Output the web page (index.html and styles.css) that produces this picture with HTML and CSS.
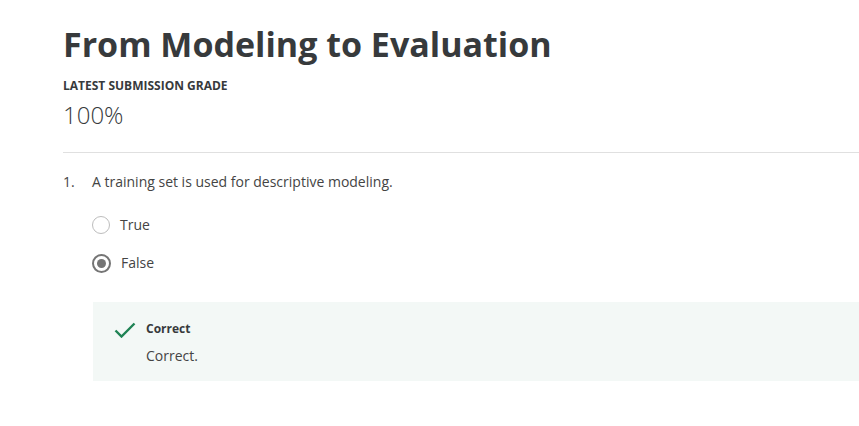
FILE: index.html
```html
<!DOCTYPE html>
<html>
<head>
<meta charset="utf-8">
<link rel="stylesheet" href="styles.css">
</head>
<body>
<main class="page">
  <h1 class="title">From Modeling to Evaluation</h1>
  <div class="grade-label">LATEST SUBMISSION GRADE</div>
  <div class="grade">100%</div>
  <hr class="divider">
  <section class="question">
    <div class="q-row">
      <span class="q-num">1.</span>
      <span class="q-text">A training set is used for descriptive modeling.</span>
    </div>
    <div class="options">
      <label class="option">
        <span class="radio"></span>
        <span class="opt-text">True</span>
      </label>
      <label class="option">
        <span class="radio checked"></span>
        <span class="opt-text">False</span>
      </label>
    </div>
    <div class="feedback">
      <svg class="check" width="22" height="16" viewBox="0 0 22 16"><path d="M1.5 8.5 L7.5 14.5 L20.5 1.5" fill="none" stroke="#1f8354" stroke-width="2.4"/></svg>
      <div class="fb-body">
        <div class="fb-title">Correct</div>
        <div class="fb-text">Correct.</div>
      </div>
    </div>
  </section>
</main>
</body>
</html>
```

FILE: styles.css
```css
html, body {
  margin: 0;
  padding: 0;
  background: #fff;
}
body {
  font-family: "Open Sans", "Noto Sans", sans-serif;
  color: #373a3c;
  overflow: hidden;
}
.page {
  padding: 20px 0 0 63px;
}
.title {
  margin: 0;
  font-size: 34px;
  font-weight: 700;
  line-height: 48px;
  color: #373a3c;
}
.grade-label {
  margin-top: 10px;
  font-size: 12px;
  font-weight: 700;
  line-height: 16px;
  color: #373a3c;
}
.grade {
  margin-top: 6px;
  font-size: 24px;
  font-weight: 300;
  line-height: 30px;
  color: #373a3c;
}
.divider {
  margin: 22px 0 0 0;
  border: 0;
  border-top: 1px solid #e0e0e0;
  height: 0;
}
.question {
  padding-top: 19px;
}
.q-row {
  display: flex;
  font-size: 14px;
  line-height: 20px;
  color: #444;
}
.q-num {
  width: 29px;
}
.options {
  margin-top: 23px;
  padding-left: 29px;
  display: flex;
  flex-direction: column;
  gap: 18px;
}
.option {
  display: flex;
  align-items: center;
  gap: 10px;
  font-size: 14px;
  line-height: 20px;
  color: #444;
}
.radio {
  width: 16px;
  height: 16px;
  border: 1.5px solid #bdbdbd;
  border-radius: 50%;
  box-sizing: content-box;
  position: relative;
}
.radio.checked {
  border: 2px solid #757575;
  width: 15px;
  height: 15px;
}
.radio.checked::after {
  content: "";
  position: absolute;
  left: 3px;
  top: 3px;
  width: 9px;
  height: 9px;
  border-radius: 50%;
  background: #757575;
}
.feedback {
  margin-top: 29px;
  margin-left: 30px;
  background: #f3f8f6;
  height: 79px;
  display: flex;
  align-items: flex-start;
  padding: 19px 0 0 21px;
  box-sizing: border-box;
  gap: 10px;
}
.check {
  margin-top: 1px;
}
.fb-title {
  font-size: 12px;
  font-weight: 700;
  line-height: 16px;
}
.fb-text {
  margin-top: 10px;
  font-size: 14px;
  line-height: 18px;
  color: #444;
}
```
